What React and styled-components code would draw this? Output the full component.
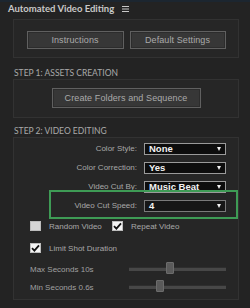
import React from "react";
import styled, { createGlobalStyle } from "styled-components";

const GlobalStyle = createGlobalStyle`
  html, body {
    margin: 0;
    padding: 0;
    background: #232323;
  }
  body {
    width: 250px;
    height: 308px;
    overflow: hidden;
    font-family: "Liberation Sans", Arial, sans-serif;
  }
`;

const Page = styled.div`
  width: 250px;
  height: 308px;
  background: #232323;
  border-top: 2px solid #1c2630;
  box-sizing: border-box;
`;

const Header = styled.div`
  height: 13px;
  display: flex;
  align-items: center;
  gap: 8px;
  padding-left: 8px;
`;

const Title = styled.span`
  font-family: Lato, "Liberation Sans", sans-serif;
  font-weight: 700;
  font-size: 9.5px;
  color: #c8c8c8;
`;

const Panel = styled.div`
  margin-left: 13px;
  width: 226px;
  height: ${(p) => (p.$h ? `${p.$h}px` : "auto")};
  box-sizing: border-box;
  background: #262626;
  border: 1px solid #323232;
  padding: ${(p) => p.$pad || "0"};
  margin-top: ${(p) => p.$top || "0"};
`;

const ButtonRow = styled.div`
  display: flex;
  justify-content: center;
  gap: 6px;
`;

const Button = styled.button`
  width: ${(p) => p.$w}px;
  height: ${(p) => p.$h || 18}px;
  box-sizing: border-box;
  background: #373737;
  border: 1px solid #606060;
  box-shadow: inset 0 0 0 1px #2c2c2c;
  color: #aaaaaa;
  font-family: "Liberation Sans", Arial, sans-serif;
  font-size: 9px;
  letter-spacing: 0.1px;
  padding: 0;
`;

const StepTitle = styled.div`
  margin: ${(p) => p.$top}px 0 0 14px;
  height: 10px;
  line-height: 10px;
  font-family: Lato, "Liberation Sans", sans-serif;
  font-size: 8.5px;
  color: #a9a9a9;
  text-transform: uppercase;
`;

const FieldGrid = styled.div`
  display: grid;
  grid-template-columns: 1fr 82px;
  column-gap: 7px;
  row-gap: 7px;
  padding-right: 12px;
`;

const Label = styled.span`
  text-align: right;
  font-size: 8px;
  color: #a8a8a8;
  line-height: 12px;
  position: relative;
`;

const Select = styled.div`
  height: 12px;
  box-sizing: border-box;
  background: ${(p) => (p.$dim ? "#161616" : "#0d0d0d")};
  border: 1px solid ${(p) => (p.$dim ? "#7a7a7a" : "#9a9a9a")};
  display: flex;
  align-items: center;
  justify-content: space-between;
  padding: 0 4px;
  color: #f2f2f2;
  font-weight: 700;
  font-size: 9.5px;
  line-height: 10px;
`;

const Arrow = styled.span`
  width: 0;
  height: 0;
  border-left: 2.5px solid transparent;
  border-right: 2.5px solid transparent;
  border-top: 4px solid #f0f0f0;
`;

/* green annotation frame drawn over the "Video Cut Speed" row */
const Highlight = styled.span`
  position: absolute;
  left: 35px;
  top: -10px;
  width: 189px;
  height: 29px;
  box-sizing: border-box;
  border: 2px solid #3e9b55;
  pointer-events: none;
`;

const CheckRow = styled.div`
  display: flex;
  align-items: center;
  margin: ${(p) => p.$top}px 0 0 16px;
  height: 10px;
`;

const CheckItem = styled.label`
  display: flex;
  align-items: center;
  gap: 8px;
  width: ${(p) => p.$w || "auto"};
  font-size: 8px;
  color: #a8a8a8;
`;

const Box = styled.span`
  width: 11px;
  height: 10px;
  box-sizing: border-box;
  background: ${(p) => (p.$checked ? "#f4f4f4" : "#d6d6d6")};
  border: 1px solid #bdbdbd;
  display: flex;
  align-items: center;
  justify-content: center;
`;

const SliderRow = styled.div`
  display: flex;
  align-items: center;
  justify-content: space-between;
  margin: ${(p) => p.$top}px 12px 0 16px;
  height: 12px;
`;

const SliderLabel = styled.span`
  font-size: 8px;
  color: #a0a0a0;
`;

const Track = styled.div`
  position: relative;
  width: 97px;
  height: 3px;
  background: #474747;
  border-top: 1px solid #2e2e2e;
`;

const Thumb = styled.span`
  position: absolute;
  top: -6px;
  width: 8px;
  height: 12px;
  box-sizing: border-box;
  background: #5a5a5a;
  border: 1px solid #6c6c6c;
  border-radius: 1px;
`;

const Menu = () => (
  <svg width="7" height="6" viewBox="0 0 7 6">
    <rect x="0" y="0" width="7" height="1" fill="#c8c8c8" />
    <rect x="0" y="2.5" width="7" height="1" fill="#c8c8c8" />
    <rect x="0" y="5" width="7" height="1" fill="#c8c8c8" />
  </svg>
);

const Check = () => (
  <svg width="9" height="8" viewBox="0 0 9 8">
    <path d="M1 4.2 L3.4 6.6 L8 1.4" stroke="#111" strokeWidth="1.8" fill="none" />
  </svg>
);

const fields = [
  { label: "Color Style:", value: "None" },
  { label: "Color Correction:", value: "Yes" },
  { label: "Video Cut By:", value: "Music Beat" },
  { label: "Video Cut Speed:", value: "4", highlight: true },
];

const sliders = [
  { label: "Max Seconds 10s", pos: 0.38, top: 10 },
  { label: "Min Seconds 0.6s", pos: 0.28, top: 6 },
];

export default function App() {
  return (
    <Page>
      <GlobalStyle />
      <Header>
        <Title>Automated Video Editing</Title>
        <Menu />
      </Header>

      <Panel $top="4px" $pad="11px 0 8px">
        <ButtonRow>
          <Button $w={97}>Instructions</Button>
          <Button $w={96}>Default Settings</Button>
        </ButtonRow>
      </Panel>

      <StepTitle $top={10}>Step 1: Assets Creation</StepTitle>
      <Panel $top="1px" $pad="8px 0 9px">
        <ButtonRow>
          <Button $w={149} $h={20}>Create Folders and Sequence</Button>
        </ButtonRow>
      </Panel>

      <StepTitle $top={8}>Step 2: Video Editing</StepTitle>
      <Panel $top="1px" $pad="5px 0 0" $h={163}>
        <FieldGrid>
          {fields.map((f) => (
            <React.Fragment key={f.label}>
              <Label>
                {f.highlight && <Highlight />}
                {f.label}
              </Label>
              <Select $dim={f.highlight}>
                {f.value}
                <Arrow />
              </Select>
            </React.Fragment>
          ))}
        </FieldGrid>

        <CheckRow $top={9}>
          <CheckItem $w="82px">
            <Box />
            Random Video
          </CheckItem>
          <CheckItem>
            <Box $checked>
              <Check />
            </Box>
            Repeat Video
          </CheckItem>
        </CheckRow>
        <CheckRow $top={12}>
          <CheckItem>
            <Box $checked>
              <Check />
            </Box>
            Limit Shot Duration
          </CheckItem>
        </CheckRow>

        {sliders.map((s) => (
          <SliderRow key={s.label} $top={s.top}>
            <SliderLabel>{s.label}</SliderLabel>
            <Track>
              <Thumb style={{ left: `${s.pos * 97}px` }} />
            </Track>
          </SliderRow>
        ))}
      </Panel>
    </Page>
  );
}
